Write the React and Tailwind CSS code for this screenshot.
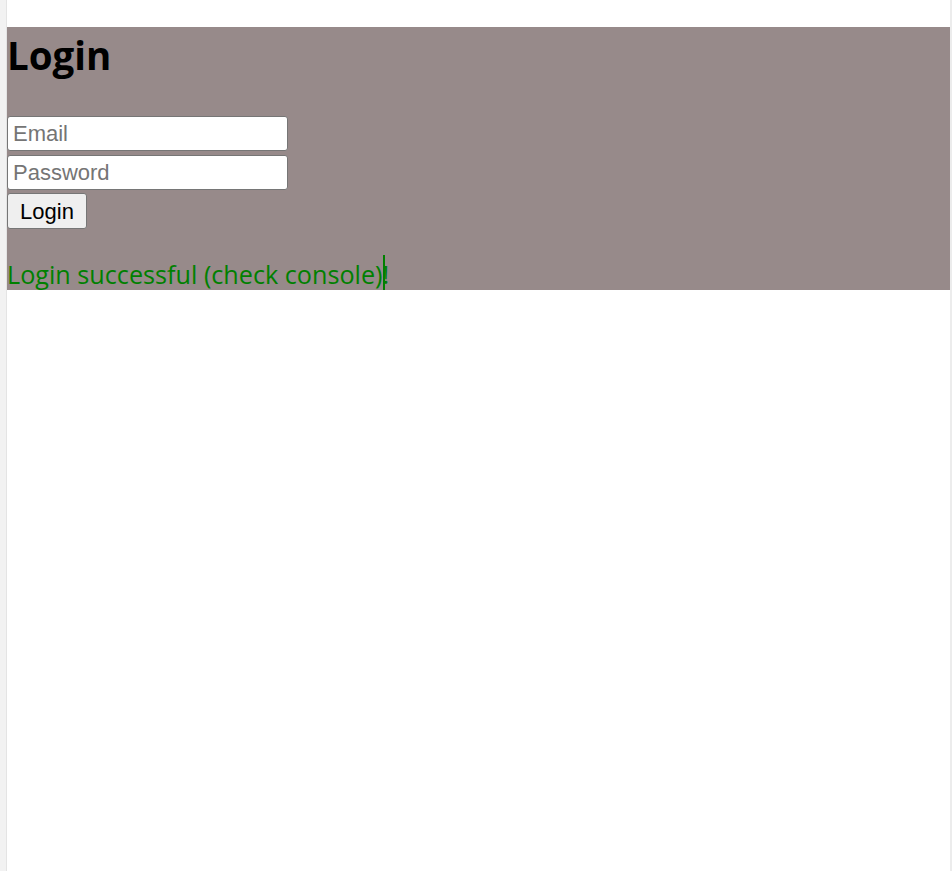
import { useState } from 'react';

export default function App() {
    const [email, setEmail] = useState('');
    const [password, setPassword] = useState('');

    return (
        <div className="min-h-screen flex bg-white">
            <div className="w-[7px] bg-[#f2f2f2] border-r border-[#e4e4e4]" />
            <div className="flex-1 pt-[27px]">
                <div className="bg-[#978a8a] font-['Open_Sans',sans-serif]">
                    <h1 className="pt-[2px] text-[38.5px] leading-[53px] font-bold text-black">Login</h1>
                    <form className="mt-[34px] flex flex-col items-start font-['Liberation_Sans',Arial,sans-serif] text-[22px]">
                        <input
                            type="email"
                            placeholder="Email"
                            value={email}
                            onChange={(e) => setEmail(e.target.value)}
                            className="w-[281px] h-[35px] bg-white border border-[#767676] rounded-[3px] px-[5px] placeholder:text-[#757575] text-black"
                        />
                        <input
                            type="password"
                            placeholder="Password"
                            value={password}
                            onChange={(e) => setPassword(e.target.value)}
                            className="mt-[4px] w-[281px] h-[35px] bg-white border border-[#767676] rounded-[3px] px-[5px] placeholder:text-[#757575] text-black"
                        />
                        <button
                            type="button"
                            className="mt-[3px] w-[80px] h-[36px] bg-[#efefef] border border-[#767676] rounded-[3px] text-black"
                        >
                            Login
                        </button>
                    </form>
                    <p className="mt-[26px] text-[25.2px] leading-[35px] text-[#008000]">
                        <span className="relative top-[2px]">Login successful (check console)</span>
                        <span className="inline-block w-[2px] h-[35px] align-top bg-[#008000] -mr-[2px]" />
                        <span className="relative top-[2px]">!</span>
                    </p>
                </div>
            </div>
            <div className="w-[2px] bg-[#ececec]" />
        </div>
    );
}
